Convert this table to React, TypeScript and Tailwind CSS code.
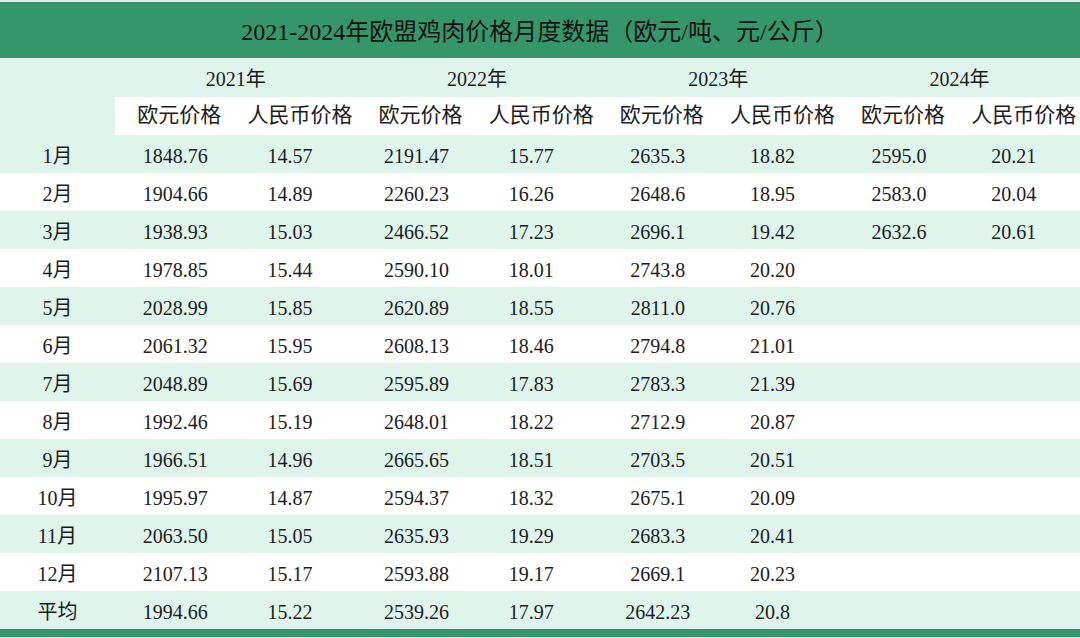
import React from "react";

const ROWS: [string, string[]][] = [
  ["1月", ["1848.76", "14.57", "2191.47", "15.77", "2635.3", "18.82", "2595.0", "20.21"]],
  ["2月", ["1904.66", "14.89", "2260.23", "16.26", "2648.6", "18.95", "2583.0", "20.04"]],
  ["3月", ["1938.93", "15.03", "2466.52", "17.23", "2696.1", "19.42", "2632.6", "20.61"]],
  ["4月", ["1978.85", "15.44", "2590.10", "18.01", "2743.8", "20.20", "", ""]],
  ["5月", ["2028.99", "15.85", "2620.89", "18.55", "2811.0", "20.76", "", ""]],
  ["6月", ["2061.32", "15.95", "2608.13", "18.46", "2794.8", "21.01", "", ""]],
  ["7月", ["2048.89", "15.69", "2595.89", "17.83", "2783.3", "21.39", "", ""]],
  ["8月", ["1992.46", "15.19", "2648.01", "18.22", "2712.9", "20.87", "", ""]],
  ["9月", ["1966.51", "14.96", "2665.65", "18.51", "2703.5", "20.51", "", ""]],
  ["10月", ["1995.97", "14.87", "2594.37", "18.32", "2675.1", "20.09", "", ""]],
  ["11月", ["2063.50", "15.05", "2635.93", "19.29", "2683.3", "20.41", "", ""]],
  ["12月", ["2107.13", "15.17", "2593.88", "19.17", "2669.1", "20.23", "", ""]],
  ["平均", ["1994.66", "15.22", "2539.26", "17.97", "2642.23", "20.8", "", ""]],
];

const YEARS = ["2021年", "2022年", "2023年", "2024年"];

const FONT = { fontFamily: '"Liberation Serif", "Noto Sans CJK SC", serif' };

export default function App() {
  return (
    <div className="w-[1080px] h-[638px] overflow-hidden bg-[#e6ebe8] text-[#1c1c1c]" style={FONT}>
      <div className="h-[2px]" />

      {/* title */}
      <div className="flex h-[56px] items-center justify-center bg-[#36966b] pt-1 text-[24px] text-[#111]">
        2021-2024年欧盟鸡肉价格月度数据（欧元/吨、元/公斤）
      </div>

      {/* year row */}
      <div className="grid h-[39px] grid-cols-[115px_repeat(4,1fr)] items-center bg-[#dff5ec] pt-[2px] text-[20px]">
        <div />
        {YEARS.map((y) => (
          <div key={y} className="text-center">
            {y}
          </div>
        ))}
      </div>

      {/* sub header */}
      <div className="grid h-[38px] grid-cols-[115px_repeat(8,1fr)] items-center text-[21px]">
        <div className="h-full bg-[#dff5ec]" />
        {YEARS.flatMap((y) => [
          <div key={y + "e"} className="flex h-full items-center justify-center bg-white pl-2">
            欧元价格
          </div>,
          <div key={y + "r"} className="flex h-full items-center justify-center bg-white pl-2">
            人民币价格
          </div>,
        ])}
      </div>

      {/* data rows */}
      {ROWS.map(([label, vals], i) => (
        <div
          key={label}
          className={
            "grid h-[38px] grid-cols-[115px_repeat(8,1fr)] items-center pt-[3px] text-[20px] " +
            (i % 2 === 0 ? "bg-[#dff5ec]" : "bg-white")
          }
        >
          <div className="text-center">{label}</div>
          {vals.map((v, j) => (
            <div key={j} className={j % 2 === 0 ? "text-center" : "text-center pr-3"}>
              {v}
            </div>
          ))}
        </div>
      ))}

      <div className="h-[8px] bg-[#36966b]" />
    </div>
  );
}
